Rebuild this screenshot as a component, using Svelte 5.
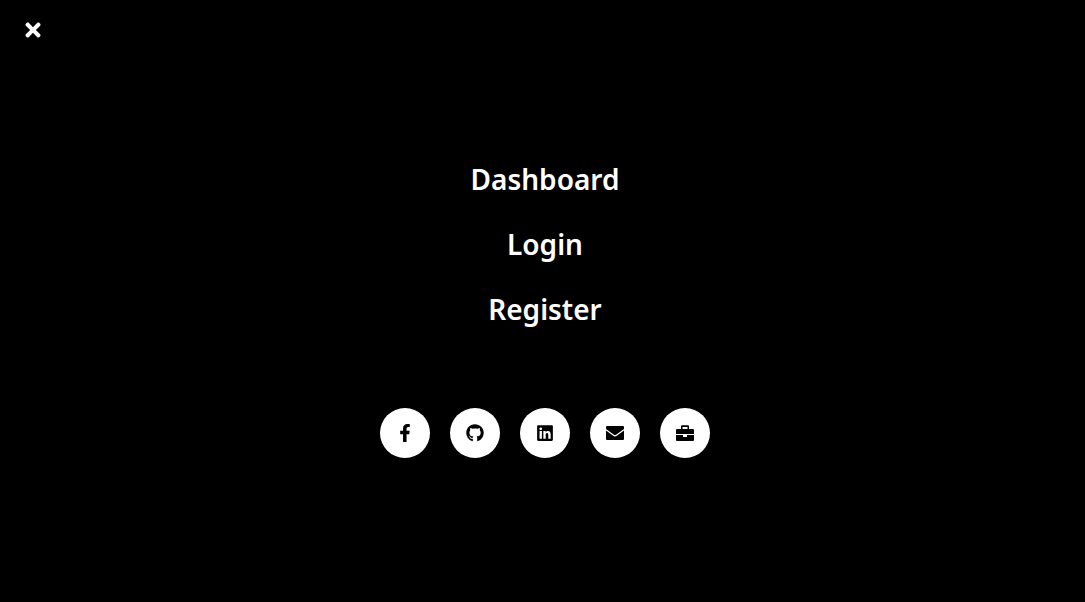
<script>
  const links = ['Dashboard', 'Login', 'Register'];

  const socials = [
    {
      label: 'Facebook',
      box: '0 0 320 512',
      width: 12,
      path: 'M279.14 288l14.22-92.66h-88.91v-60.13c0-25.35 12.42-50.06 52.24-50.06h40.42V6.26S260.43 0 225.36 0c-73.22 0-121.08 44.38-121.08 124.72v70.62H22.89V288h81.39v224h100.17V288z'
    },
    {
      label: 'GitHub',
      box: '0 0 496 512',
      width: 18,
      path: 'M165.9 397.4c0 2-2.3 3.6-5.2 3.6-3.3.3-5.6-1.3-5.6-3.6 0-2 2.3-3.6 5.2-3.6 3-.3 5.6 1.3 5.6 3.6zm-31.1-4.5c-.7 2 1.3 4.3 4.3 4.9 2.6 1 5.6 0 6.2-2s-1.3-4.3-4.3-5.2c-2.6-.7-5.5.3-6.2 2.3zm44.2-1.7c-2.9.7-4.9 2.6-4.6 4.9.3 2 2.9 3.3 5.9 2.6 2.9-.7 4.9-2.6 4.6-4.6-.3-1.9-3-3.2-5.9-2.9zM244.8 8C106.1 8 0 113.3 0 252c0 110.9 69.8 205.8 169.5 239.2 12.8 2.3 17.3-5.6 17.3-12.1 0-6.2-.3-40.4-.3-61.4 0 0-70 15-84.7-29.8 0 0-11.4-29.1-27.8-36.6 0 0-22.9-15.7 1.6-15.4 0 0 24.9 2 38.6 25.8 21.9 38.6 58.6 27.5 72.9 20.9 2.3-16 8.8-27.1 16-33.7-55.9-6.2-112.3-14.3-112.3-110.5 0-27.5 7.6-41.3 23.6-58.9-2.6-6.5-11.1-33.3 2.6-67.9 20.9-6.5 69 27 69 27 20-5.6 41.5-8.5 62.8-8.5s42.8 2.9 62.8 8.5c0 0 48.1-33.6 69-27 13.7 34.7 5.2 61.4 2.6 67.9 16 17.7 25.8 31.5 25.8 58.9 0 96.5-58.9 104.2-114.8 110.5 9.2 7.9 17 22.9 17 46.4 0 33.7-.3 75.4-.3 83.6 0 6.5 4.6 14.4 17.3 12.1C428.2 457.8 496 362.9 496 252 496 113.3 383.5 8 244.8 8zM97.2 352.9c-1.3 1-1 3.3.7 5.2 1.6 1.6 3.9 2.3 5.2 1 1.3-1 1-3.3-.7-5.2-1.6-1.6-3.9-2.3-5.2-1zm-10.8-8.1c-.7 1.3.3 2.9 2.3 3.9 1.6 1 3.6.7 4.3-.7.7-1.3-.3-2.9-2.3-3.9-2-.6-3.6-.3-4.3.7zm32.4 35.6c-1.6 1.3-1 4.3 1.3 6.2 2.3 2.3 5.2 2.6 6.5 1 1.3-1.3.7-4.3-1.3-6.2-2.2-2.3-5.2-2.6-6.5-1zm-11.4-14.7c-1.6 1-1.6 3.6 0 5.9 1.6 2.3 4.3 3.3 5.6 2.3 1.6-1.3 1.6-3.9 0-6.2-1.4-2.3-4-3.3-5.6-2z'
    },
    {
      label: 'LinkedIn',
      box: '0 0 448 512',
      width: 16,
      path: 'M416 32H31.9C14.3 32 0 46.5 0 64.3v383.4C0 465.5 14.3 480 31.9 480H416c17.6 0 32-14.5 32-32.3V64.3c0-17.8-14.4-32.3-32-32.3zM135.4 416H69V202.2h66.5V416zm-33.2-243c-21.3 0-38.5-17.3-38.5-38.5S80.9 96 102.2 96c21.2 0 38.5 17.3 38.5 38.5 0 21.3-17.2 38.5-38.5 38.5zm282.1 243h-66.4V312c0-24.8-.5-56.7-34.5-56.7-34.6 0-39.9 27-39.9 54.9V416h-66.4V202.2h63.7v29.2h.9c8.9-16.8 30.6-34.5 62.9-34.5 67.2 0 79.7 44.3 79.7 101.9V416z'
    },
    {
      label: 'Email',
      box: '0 0 18 18',
      width: 18,
      path: 'M1 2h16a1 1 0 0 1 1 1v2l-7.6 5.4a2.4 2.4 0 0 1-2.8 0L0 5V3a1 1 0 0 1 1-1zM0 6.6l7.2 5.2a3 3 0 0 0 3.6 0L18 6.6V15a1 1 0 0 1-1 1H1a1 1 0 0 1-1-1z'
    },
    {
      label: 'Portfolio',
      box: '0 0 18 18',
      width: 18,
      path: 'M6 1.3h6a1 1 0 0 1 1 1V5h4a1 1 0 0 1 1 1v4H0V6a1 1 0 0 1 1-1h4V2.300a1 1 0 0 1 1-1zM6.500 3v2h5V3zM0 11h7v2h4v-2h7v5a1 1 0 0 1-1 1H1a1 1 0 0 1-1-1z'
    }
  ];
</script>

<div class="overlay">
  <button class="close" type="button" aria-label="Close menu">
    <svg viewBox="0 0 352 512" width="16" height="22" aria-hidden="true">
      <path d="M242.72 256l100.07-100.07c12.28-12.28 12.28-32.19 0-44.48l-22.24-22.24c-12.28-12.28-32.19-12.28-44.48 0L176 189.28 75.93 89.21c-12.28-12.28-32.19-12.28-44.48 0L9.21 111.45c-12.28 12.28-12.28 32.19 0 44.48L109.28 256 9.21 356.07c-12.28 12.28-12.28 32.19 0 44.48l22.24 22.24c12.28 12.28 32.2 12.28 44.48 0L176 322.72l100.07 100.07c12.28 12.28 32.2 12.28 44.48 0l22.24-22.24c12.28-12.28 12.28-32.19 0-44.48L242.72 256z" />
    </svg>
  </button>

  <nav aria-label="Main">
    {#each links as link}
      <a href="#{link.toLowerCase()}">{link}</a>
    {/each}
  </nav>

  <div class="socials">
    {#each socials as item}
      <a href="#{item.label.toLowerCase()}" aria-label={item.label}>
        <svg viewBox={item.box} width={item.width} height="18" aria-hidden="true">
          <path d={item.path} fill-rule="evenodd" />
        </svg>
      </a>
    {/each}
  </div>
</div>

<style>
  :global(body) {
    margin: 0;
    background: #000;
  }

  .overlay {
    box-sizing: border-box;
    min-height: 100vh;
    padding: 15px 20px 40px 25px;
    display: flex;
    flex-direction: column;
    background: #000;
    color: #fff;
    font-family: 'Segoe UI', 'Noto Sans', 'Open Sans', sans-serif;
  }

  .close {
    align-self: flex-start;
    display: flex;
    align-items: center;
    height: 30px;
    padding: 0;
    border: 0;
    background: none;
    color: inherit;
    cursor: pointer;
  }

  svg {
    display: block;
    fill: currentColor;
  }

  nav {
    display: flex;
    flex-direction: column;
    align-items: center;
    gap: 25px;
    margin-top: 114px;
  }

  nav a {
    color: inherit;
    font-size: 28px;
    font-weight: 600;
    line-height: 40px;
    text-decoration: none;
  }

  .socials {
    display: flex;
    flex-wrap: wrap;
    justify-content: center;
    gap: 20px;
    margin-top: 79px;
  }

  .socials a {
    display: flex;
    align-items: center;
    justify-content: center;
    width: 50px;
    height: 50px;
    border-radius: 50%;
    background: #fff;
    color: #000;
  }
</style>
